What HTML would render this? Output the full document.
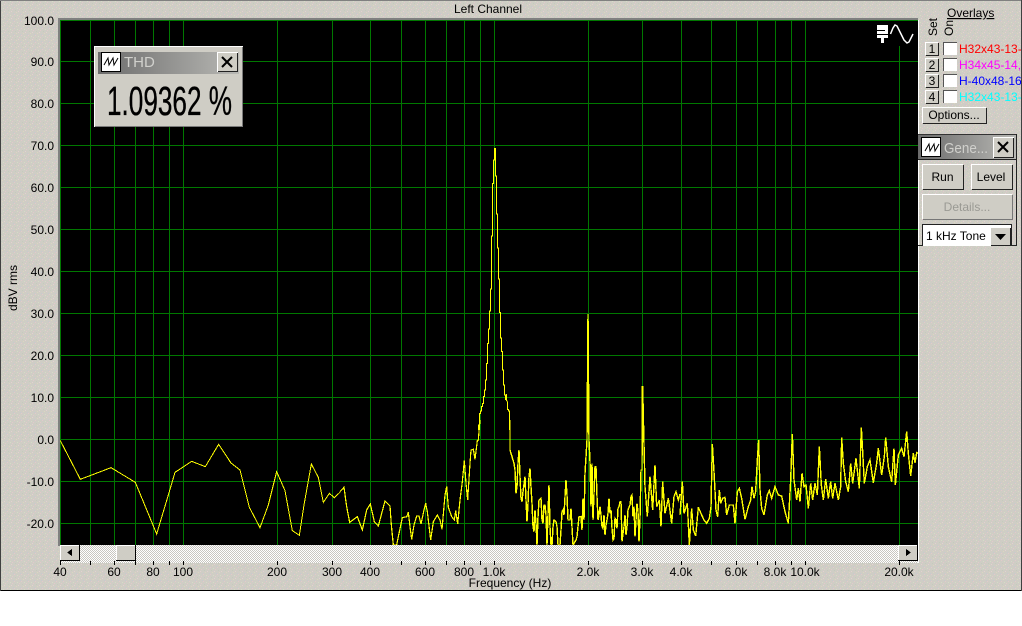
<!DOCTYPE html>
<html><head><meta charset="utf-8"><style>
html,body{margin:0;padding:0;background:#fff;width:1022px;height:626px;overflow:hidden}
svg{display:block}
text{font-family:"Liberation Sans",sans-serif;font-size:12px;fill:#000}
.g line{stroke:#007800;stroke-width:1}
.t{fill:none;stroke:#ffff00;stroke-linejoin:miter}
</style></head><body>
<svg width="1022" height="626" viewBox="0 0 1022 626" xmlns="http://www.w3.org/2000/svg">
<defs>
<pattern id="bg" width="7" height="7" patternUnits="userSpaceOnUse">
<rect width="7" height="7" fill="#cfcdc5"/>
<rect x="0" y="0" width="1" height="1" fill="#e2c9cb"/><rect x="3" y="1" width="1" height="1" fill="#d6dcc6"/>
<rect x="5" y="2" width="1" height="1" fill="#e2c9cb"/><rect x="1" y="3" width="1" height="1" fill="#c4ccbc"/>
<rect x="4" y="4" width="1" height="1" fill="#e4d0d0"/><rect x="2" y="5" width="1" height="1" fill="#dcd6c0"/>
<rect x="6" y="6" width="1" height="1" fill="#c8c8d0"/>
</pattern>
<pattern id="ck" width="2" height="2" patternUnits="userSpaceOnUse">
<rect width="2" height="2" fill="#fff"/><rect width="1" height="1" fill="#c8c6c0"/><rect x="1" y="1" width="1" height="1" fill="#c8c6c0"/>
</pattern>
<linearGradient id="tb" x1="0" x2="1" y1="0" y2="0"><stop offset="0" stop-color="#6c6c6c"/><stop offset="1" stop-color="#b8b8b4"/></linearGradient>
<clipPath id="plot"><rect x="60" y="20" width="858" height="525"/></clipPath>
<clipPath id="side"><rect x="918" y="0" width="103" height="130"/></clipPath>
</defs>

<rect x="0" y="0" width="1022" height="591" fill="url(#bg)"/>
<g shape-rendering="crispEdges">
<rect x="0" y="590" width="1022" height="1" fill="#000"/>
<rect x="0" y="0" width="1" height="591" fill="#404040"/>
<rect x="0" y="0" width="1022" height="1" fill="#808080"/>
<rect x="1021" y="0" width="1" height="591" fill="#404040"/>

<rect x="58" y="18" width="860" height="2" fill="#808080"/>
<rect x="58" y="18" width="2" height="528" fill="#808080"/>
<rect x="918" y="20" width="1" height="543" fill="#fff"/>
<rect x="60" y="20" width="858" height="525" fill="#000"/>
<g class="g">
<line x1="60.5" x2="60.5" y1="20" y2="545"/><line x1="90.5" x2="90.5" y1="20" y2="545"/><line x1="114.5" x2="114.5" y1="20" y2="545"/><line x1="135.5" x2="135.5" y1="20" y2="545"/><line x1="153.5" x2="153.5" y1="20" y2="545"/><line x1="169.5" x2="169.5" y1="20" y2="545"/><line x1="183.5" x2="183.5" y1="20" y2="545"/><line x1="277.5" x2="277.5" y1="20" y2="545"/><line x1="332.5" x2="332.5" y1="20" y2="545"/><line x1="370.5" x2="370.5" y1="20" y2="545"/><line x1="401.5" x2="401.5" y1="20" y2="545"/><line x1="425.5" x2="425.5" y1="20" y2="545"/><line x1="446.5" x2="446.5" y1="20" y2="545"/><line x1="464.5" x2="464.5" y1="20" y2="545"/><line x1="480.5" x2="480.5" y1="20" y2="545"/><line x1="494.5" x2="494.5" y1="20" y2="545"/><line x1="588.5" x2="588.5" y1="20" y2="545"/><line x1="642.5" x2="642.5" y1="20" y2="545"/><line x1="681.5" x2="681.5" y1="20" y2="545"/><line x1="711.5" x2="711.5" y1="20" y2="545"/><line x1="736.5" x2="736.5" y1="20" y2="545"/><line x1="757.5" x2="757.5" y1="20" y2="545"/><line x1="775.5" x2="775.5" y1="20" y2="545"/><line x1="791.5" x2="791.5" y1="20" y2="545"/><line x1="805.5" x2="805.5" y1="20" y2="545"/><line x1="899.5" x2="899.5" y1="20" y2="545"/>
<line x1="60" x2="918" y1="20.5" y2="20.5"/><line x1="60" x2="918" y1="61.5" y2="61.5"/><line x1="60" x2="918" y1="103.5" y2="103.5"/><line x1="60" x2="918" y1="145.5" y2="145.5"/><line x1="60" x2="918" y1="187.5" y2="187.5"/><line x1="60" x2="918" y1="229.5" y2="229.5"/><line x1="60" x2="918" y1="271.5" y2="271.5"/><line x1="60" x2="918" y1="313.5" y2="313.5"/><line x1="60" x2="918" y1="355.5" y2="355.5"/><line x1="60" x2="918" y1="397.5" y2="397.5"/><line x1="60" x2="918" y1="439.5" y2="439.5"/><line x1="60" x2="918" y1="481.5" y2="481.5"/><line x1="60" x2="918" y1="523.5" y2="523.5"/>
</g>
<rect x="875" y="21" width="43" height="25" fill="#000"/>
</g>

<g clip-path="url(#plot)" shape-rendering="crispEdges">
<g transform="translate(0,420) scale(.33333)"><polyline class="t" stroke-width="3" points="181,62 241,178 333,143 406,187 470,342 505,225 525,157 575,124 616,140 656,73 693,129 720,150 748,262 780,323 805,255 830,155 855,212 877,332 898,346 912,255 934,132 955,172 970,247 988,220 1003,233 1020,217"/></g>
<g transform="translate(340,420) scale(.33333)"><polyline class="t" stroke-width="3.6" points="0,215 12,202 20,260 29,307 52,290 67,330 80,270 91,252 103,305 115,318 135,243 150,258 154,315 160,375 170,375 175,350 187,293 200,290 205,277 210,320 215,358 222,315 230,288 237,288 243,312 252,270 257,250 262,275 272,360 280,305 292,285 300,300 306,328 315,225 320,200 325,262 335,290 343,300 347,272 353,312 360,240 367,185 373,122 378,190 383,240 390,130 393,90 400,88 405,118 412,62 415,60 420,0"/></g>
<g transform="translate(440,130) scale(.33333)"><polyline class="t" stroke-width="3" points="115,900 115,885 118,885 118,850 121,850 121,843 124,843 124,830 127,830 127,820 130,820 130,800 133,800 133,780 136,780 136,750 139,750 139,700 142,700 142,640 145,640 145,597 148,597 148,543 151,543 151,477 154,477 154,318 157,318 157,160 160,160 160,90 163,90 163,55 166,55 166,138 169,138 169,252 172,252 172,354 175,354 175,447 178,447 178,548 181,548 181,624 184,624 184,665 187,665 187,720 190,720 190,765 193,765 193,795 196,795 196,810 199,792 199,810 202,815 202,838 205,838 205,843 208,843 208,900"/></g>
<!-- 510..643 noise, stepped per pixel -->
<g transform="translate(510,440) scale(.33333)"><polyline class="t" stroke-width="4.2" points="0,-60 0,30 3,40 6,50 9,60 12,70 15,90 18,160 21,140 24,70 27,30 30,110 33,175 36,185 39,155 45,110 48,180 51,245 54,190 57,110 60,85 63,140 66,190 69,260 72,275 75,210 78,250 81,315 84,230 87,180 93,175 96,240 99,250 102,195 105,195 108,225 111,315 117,135 120,260 123,315 126,315 129,260 132,240 138,245 141,260 144,315 150,315 153,270 156,215 159,210 162,225 165,170 168,120 171,165 174,240 180,240 183,205 186,260 189,315 192,310 198,300 201,290 207,230 213,230 216,270 219,175 222,240 225,100 228,50 231,0 234,-378 237,0 240,65 243,200 246,70 249,240 255,80 258,80 261,170 264,240 267,225 270,200 273,225 276,260 279,265 282,225 285,285 288,255 291,240 294,220 297,175 300,220 303,210 306,265 309,300 312,295 315,235 318,240 321,265 324,205 327,200 330,185 333,185 336,305 339,280 342,260 345,225 348,285 351,260 354,210 360,195 363,170 366,165 369,230 372,200 375,290 378,240 381,190 384,215 387,305 390,235 393,90 396,90 397,-162 399,0"/></g>
<g transform="translate(340,420) scale(.33333)"><polyline class="t" stroke-width="4.2" points="908,-102 911,30 915,200 922,290 930,170 938,270 945,135 950,260 958,240 963,320 968,185 975,280 985,235 995,310 1002,230 1008,215 1015,240 1020,222"/></g>
<g transform="translate(680,420) scale(.33333)"><polyline class="t" stroke-width="4.2" points="0,285 7,185 12,280 22,250 28,375 35,265 40,330 47,348 55,262 65,285 72,300 80,310 88,295 93,260 97,72 102,155 108,270 113,290 118,210 122,250 128,235 135,232 140,285 148,255 160,255 165,310 172,215 178,205 185,235 195,298 205,260 212,240 216,200 222,235 227,215 232,120 236,60 240,210 245,265 252,285 262,225 268,212 275,235 285,200 295,225 305,228 315,275 325,310 332,180 337,42 342,180 350,240 355,205 360,245 366,160 372,200 378,195 385,265 392,190 398,240 405,190 412,225 418,80 424,195 430,240 437,178 445,235 452,185 458,235 465,190 475,240 482,200 485,52 490,130 497,185 505,215 512,130 518,190 528,115 538,205 544,22 548,95 553,190 562,140 570,120 580,188 590,130 595,85 605,165 613,110 617,52 625,140 635,185 642,85 646,195 655,105 665,85 672,110 680,35 685,100 692,168 700,100 705,128 710,98 714,100"/></g>
</g>

<!-- scrollbar -->
<g shape-rendering="crispEdges">
<rect x="60" y="545" width="858" height="18" fill="url(#ck)"/>
<rect x="60" y="545" width="19" height="16" fill="#fff"/><rect x="61" y="546" width="18" height="14" fill="#cfcdc5"/><rect x="60" y="560" width="20" height="1" fill="#000"/><rect x="79" y="545" width="1" height="16" fill="#000"/>
<polygon points="72,549 72,556 67,552.5" fill="#000"/>
<rect x="116" y="545" width="19" height="16" fill="#fff"/><rect x="117" y="546" width="18" height="14" fill="#cfcdc5"/><rect x="116" y="560" width="20" height="1" fill="#000"/><rect x="135" y="545" width="1" height="16" fill="#000"/>
<rect x="898" y="545" width="19" height="16" fill="#fff"/><rect x="899" y="546" width="18" height="14" fill="#cfcdc5"/><rect x="898" y="560" width="20" height="1" fill="#000"/><rect x="917" y="545" width="1" height="16" fill="#000"/>
<polygon points="906,549 906,556 911,552.5" fill="#000"/>
<g fill="#000"><rect x="60" y="561" width="1" height="4"/><rect x="90" y="561" width="1" height="4"/><rect x="114" y="561" width="1" height="4"/><rect x="135" y="561" width="1" height="4"/><rect x="153" y="561" width="1" height="4"/><rect x="169" y="561" width="1" height="4"/><rect x="183" y="561" width="1" height="4"/><rect x="277" y="561" width="1" height="4"/><rect x="332" y="561" width="1" height="4"/><rect x="370" y="561" width="1" height="4"/><rect x="401" y="561" width="1" height="4"/><rect x="425" y="561" width="1" height="4"/><rect x="446" y="561" width="1" height="4"/><rect x="464" y="561" width="1" height="4"/><rect x="480" y="561" width="1" height="4"/><rect x="494" y="561" width="1" height="4"/><rect x="588" y="561" width="1" height="4"/><rect x="642" y="561" width="1" height="4"/><rect x="681" y="561" width="1" height="4"/><rect x="711" y="561" width="1" height="4"/><rect x="736" y="561" width="1" height="4"/><rect x="757" y="561" width="1" height="4"/><rect x="775" y="561" width="1" height="4"/><rect x="791" y="561" width="1" height="4"/><rect x="805" y="561" width="1" height="4"/><rect x="899" y="561" width="1" height="4"/></g>
</g>

<!-- axis labels -->
<text x="488" y="13" text-anchor="middle">Left Channel</text>
<g text-anchor="end">
<text x="54" y="25">100.0</text><text x="54" y="66">90.0</text><text x="54" y="108">80.0</text><text x="54" y="150">70.0</text><text x="54" y="192">60.0</text><text x="54" y="234">50.0</text><text x="54" y="276">40.0</text><text x="54" y="318">30.0</text><text x="54" y="360">20.0</text><text x="54" y="402">10.0</text><text x="54" y="444">0.0</text><text x="54" y="486">-10.0</text><text x="54" y="528">-20.0</text>
</g>
<text transform="translate(17,288) rotate(-90)" text-anchor="middle">dBV rms</text>
<g text-anchor="middle">
<text x="60" y="576">40</text><text x="114" y="576">60</text><text x="153" y="576">80</text><text x="183" y="576">100</text><text x="277" y="576">200</text><text x="332" y="576">300</text><text x="370" y="576">400</text><text x="425" y="576">600</text><text x="464" y="576">800</text><text x="494" y="576">1.0k</text><text x="588" y="576">2.0k</text><text x="642" y="576">3.0k</text><text x="681" y="576">4.0k</text><text x="736" y="576">6.0k</text><text x="775" y="576">8.0k</text><text x="805" y="576">10.0k</text><text x="899" y="576">20.0k</text>
<text x="510" y="587">Frequency (Hz)</text>
</g>

<!-- ST icon -->
<g shape-rendering="crispEdges" fill="#fff">
<rect x="877" y="25" width="11" height="3"/><rect x="877" y="25" width="3" height="5"/><rect x="877" y="28" width="11" height="2"/><rect x="885" y="29" width="3" height="5"/><rect x="877" y="31" width="11" height="3"/>
<rect x="877" y="35" width="11" height="3"/><rect x="881" y="38" width="3" height="5"/>
</g>
<path d="M890.5 34 L893 28 L895 25 L897 26 L901 34 L904 40 L907 43 L909 42 L913 34" fill="none" stroke="#fff" stroke-width="1.5"/>

<!-- THD window -->
<g shape-rendering="crispEdges">
<rect x="94" y="46" width="149" height="81" fill="#fff"/>
<rect x="95" y="47" width="148" height="80" fill="#7a7a7a"/>
<rect x="95" y="47" width="147" height="79" fill="#cfcdc5"/>
<rect x="98" y="52" width="141" height="22" fill="url(#tb)"/>
<rect x="101" y="52" width="20" height="20" fill="#000"/><rect x="102" y="53" width="18" height="18" fill="#fff"/>
<rect x="217" y="52" width="21" height="20" fill="#fff"/><rect x="218" y="53" width="20" height="19" fill="#222"/><rect x="218" y="53" width="19" height="18" fill="#cfcdc5"/>
</g>
<path d="M104 65 L108 58 L109 65 L113 58 L114 65 L118 58" fill="none" stroke="#000"/>
<path d="M222 57 L232 67 M232 57 L222 67" stroke="#000" stroke-width="2"/>
<text x="124" y="67" style="font-size:15px;fill:#d0d0cc">THD</text>
<text x="107" y="115" style="font-size:41px;stroke:#000;stroke-width:.35" textLength="125" lengthAdjust="spacingAndGlyphs">1.09362 %</text>

<!-- Overlays -->
<text x="947" y="17" text-decoration="underline">Overlays</text>
<text transform="translate(937,36) rotate(-90)">Set</text>
<text transform="translate(953,36) rotate(-90)">On</text>
<g shape-rendering="crispEdges">
<g><rect x="925" y="42" width="13" height="13" fill="#fff"/><rect x="926" y="43" width="13" height="13" fill="#222"/><rect x="926" y="43" width="12" height="12" fill="#cfcdc5"/><rect x="943" y="42" width="14" height="13" fill="#555"/><rect x="944" y="43" width="13" height="12" fill="#fff"/></g>
<g><rect x="925" y="58" width="13" height="13" fill="#fff"/><rect x="926" y="59" width="13" height="13" fill="#222"/><rect x="926" y="59" width="12" height="12" fill="#cfcdc5"/><rect x="943" y="58" width="14" height="13" fill="#555"/><rect x="944" y="59" width="13" height="12" fill="#fff"/></g>
<g><rect x="925" y="74" width="13" height="13" fill="#fff"/><rect x="926" y="75" width="13" height="13" fill="#222"/><rect x="926" y="75" width="12" height="12" fill="#cfcdc5"/><rect x="943" y="74" width="14" height="13" fill="#555"/><rect x="944" y="75" width="13" height="12" fill="#fff"/></g>
<g><rect x="925" y="90" width="13" height="13" fill="#fff"/><rect x="926" y="91" width="13" height="13" fill="#222"/><rect x="926" y="91" width="12" height="12" fill="#cfcdc5"/><rect x="943" y="90" width="14" height="13" fill="#555"/><rect x="944" y="91" width="13" height="12" fill="#fff"/></g>
</g>
<g text-anchor="middle"><text x="932" y="53">1</text><text x="932" y="69">2</text><text x="932" y="85">3</text><text x="932" y="101">4</text></g>
<g clip-path="url(#side)">
<text x="959" y="53" style="fill:#ff0000">H32x43-13-</text>
<text x="959" y="69" style="fill:#ff00ff">H34x45-14,</text>
<text x="959" y="85" style="fill:#0000ff">H-40x48-16</text>
<text x="959" y="101" style="fill:#00ffff">H32x43-13-</text>
</g>
<g shape-rendering="crispEdges">
<rect x="922" y="107" width="64" height="16" fill="#fff"/><rect x="923" y="108" width="64" height="16" fill="#222"/><rect x="923" y="108" width="63" height="15" fill="#cfcdc5"/>
</g>
<text x="954" y="119" text-anchor="middle">Options...</text>

<!-- Generator window -->
<g shape-rendering="crispEdges">
<rect x="918" y="134" width="99" height="1" fill="#333"/>
<rect x="1016" y="134" width="1" height="112" fill="#222"/>
<rect x="918" y="245" width="99" height="1" fill="#222"/>
<rect x="918" y="135" width="98" height="24" fill="url(#tb)"/>
<rect x="918" y="159" width="98" height="1" fill="#222"/>
<rect x="921" y="137" width="20" height="20" fill="#000"/><rect x="922" y="138" width="18" height="18" fill="#fff"/>
<rect x="993" y="137" width="21" height="21" fill="#fff"/><rect x="994" y="138" width="20" height="20" fill="#222"/><rect x="994" y="138" width="19" height="19" fill="#cfcdc5"/>
<rect x="922" y="164" width="41" height="25" fill="#fff"/><rect x="923" y="165" width="41" height="25" fill="#222"/><rect x="923" y="165" width="40" height="24" fill="#cfcdc5"/>
<rect x="971" y="164" width="41" height="25" fill="#fff"/><rect x="972" y="165" width="41" height="25" fill="#222"/><rect x="972" y="165" width="40" height="24" fill="#cfcdc5"/>
<rect x="922" y="194" width="90" height="25" fill="#fff"/><rect x="923" y="195" width="90" height="25" fill="#777"/><rect x="923" y="195" width="89" height="24" fill="#cfcdc5"/>
<rect x="922" y="224" width="90" height="22" fill="#222"/><rect x="923" y="225" width="88" height="21" fill="#fff"/>
<rect x="990" y="227" width="20" height="18" fill="#fff"/><rect x="991" y="228" width="20" height="18" fill="#222"/><rect x="991" y="228" width="19" height="17" fill="#cfcdc5"/>
</g>
<path d="M925 151 L929 144 L930 151 L934 144 L935 151 L939 144" fill="none" stroke="#000"/>
<path d="M998 142 L1008 152 M1008 142 L998 152" stroke="#000" stroke-width="2"/>
<polygon points="995,234 1006,234 1000.5,240" fill="#000"/>
<text x="944" y="153" style="font-size:15px;fill:#d0d0cc" textLength="44" lengthAdjust="spacingAndGlyphs">Gene...</text>
<text x="942.5" y="181" text-anchor="middle">Run</text>
<text x="991" y="181" text-anchor="middle">Level</text>
<text x="967" y="211" text-anchor="middle" style="fill:#9a9a94">Details...</text>
<text x="926" y="240">1 kHz Tone</text>
</svg>
</body></html>
